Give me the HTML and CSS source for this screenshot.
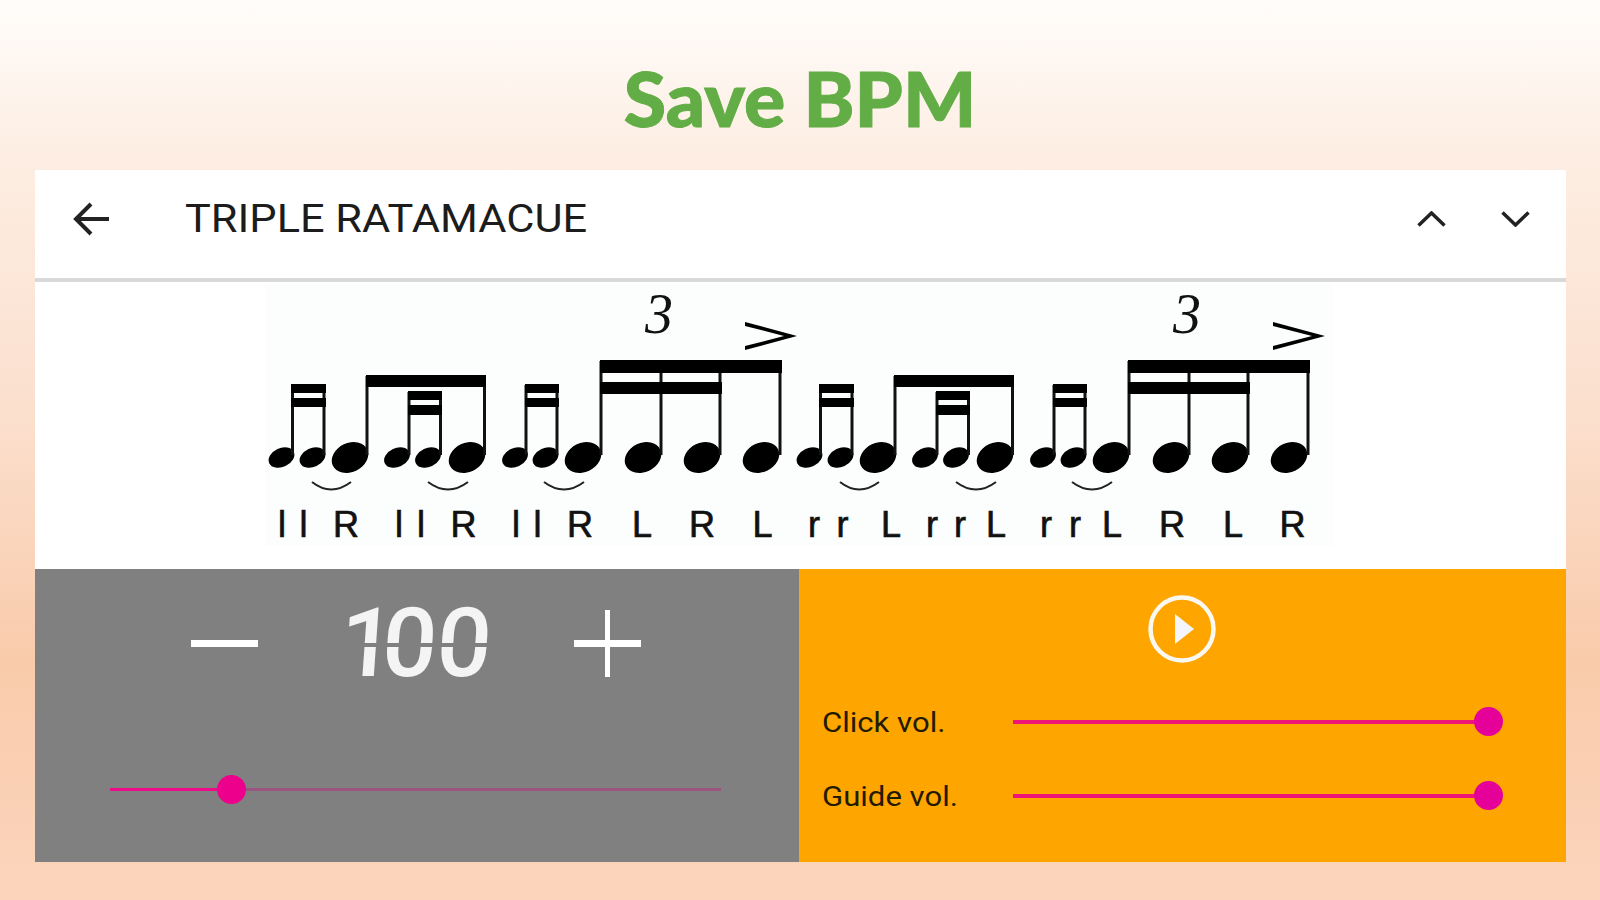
FILE: index.html
```html
<!DOCTYPE html>
<html lang="en">
<head>
  <meta charset="UTF-8">
  <title>Save BPM</title>
  <link rel="stylesheet" href="styles.css">
</head>
<body>

  <h1 class="promo-title">Save BPM</h1>

  <div class="card">
    <div class="toolbar">
      <svg class="back-icon" viewBox="0 0 37 34"><path d="M36 17H3M18 2 3 17l15 15"/></svg>
      <div class="rudiment-name">TRIPLE RATAMACUE</div>
      <div class="nav-icons">
        <svg class="chevron" viewBox="0 0 29 16"><path d="M1.5 14.5 14.5 2l13 12.5"/></svg>
        <svg class="chevron" viewBox="0 0 29 16"><path d="M1.5 1.5 14.5 14l13-12.5"/></svg>
      </div>
    </div>

    <svg class="notation" viewBox="35 282 1531 287">
      <defs>
        <g id="bar">
          <text class="tuplet" x="659" y="333">3</text>
          <polygon points="745,322 797,336 745,350 745,346 784,336 745,326"/>

          <!-- note heads -->
          <ellipse cx="281.5" cy="457.5" rx="13.5" ry="9.5" transform="rotate(-25 281.5 457.5)"/>
          <ellipse cx="312.5" cy="457.5" rx="13.5" ry="9.5" transform="rotate(-25 312.5 457.5)"/>
          <ellipse cx="350" cy="457.5" rx="19" ry="14.5" transform="rotate(-25 350 457.5)"/>
          <ellipse cx="397" cy="457.5" rx="13.5" ry="9.5" transform="rotate(-25 397 457.5)"/>
          <ellipse cx="428" cy="457.5" rx="13.5" ry="9.5" transform="rotate(-25 428 457.5)"/>
          <ellipse cx="467" cy="457.5" rx="19" ry="14.5" transform="rotate(-25 467 457.5)"/>
          <ellipse cx="515" cy="457.5" rx="13.5" ry="9.5" transform="rotate(-25 515 457.5)"/>
          <ellipse cx="545.5" cy="457.5" rx="13.5" ry="9.5" transform="rotate(-25 545.5 457.5)"/>
          <ellipse cx="583" cy="457.5" rx="19" ry="14.5" transform="rotate(-25 583 457.5)"/>
          <ellipse cx="643" cy="457.5" rx="19" ry="14.5" transform="rotate(-25 643 457.5)"/>
          <ellipse cx="702" cy="457.5" rx="19" ry="14.5" transform="rotate(-25 702 457.5)"/>
          <ellipse cx="761" cy="457.5" rx="19" ry="14.5" transform="rotate(-25 761 457.5)"/>

          <!-- stems -->
          <path class="stems" d="M292.5 385V455M324 385V455M367 376V455M409 392V455M440.5 392V455M484.5 376V455M526 385V455M557 385V455M601 361V455M661 361V455M720 361V455M780 361V455"/>

          <!-- beams -->
          <rect x="291" y="384" width="35" height="9"/>
          <rect x="291" y="398" width="35" height="9"/>
          <rect x="366" y="375" width="120" height="12"/>
          <rect x="408" y="391" width="34" height="9"/>
          <rect x="408" y="405" width="34" height="10"/>
          <rect x="525" y="384" width="34" height="9"/>
          <rect x="525" y="398" width="34" height="9"/>
          <rect x="600" y="360" width="182" height="13"/>
          <rect x="600" y="382" width="122" height="12"/>

          <!-- slurs -->
          <path class="slur" d="M312 482Q331 497 351 482M428 482Q448 497 468 482M544 482Q564 497 584 482"/>
        </g>
      </defs>

      <rect class="notation-bg" x="265" y="284" width="1068" height="262"/>
      <use href="#bar"/>
      <use href="#bar" transform="translate(528 0)"/>

      <text class="sticking" x="282" y="537">l</text>
      <text class="sticking" x="303.5" y="537">l</text>
      <text class="sticking" x="346" y="537">R</text>
      <text class="sticking" x="399" y="537">l</text>
      <text class="sticking" x="421" y="537">l</text>
      <text class="sticking" x="463.5" y="537">R</text>
      <text class="sticking" x="516" y="537">l</text>
      <text class="sticking" x="537.5" y="537">l</text>
      <text class="sticking" x="580" y="537">R</text>
      <text class="sticking" x="642" y="537">L</text>
      <text class="sticking" x="702" y="537">R</text>
      <text class="sticking" x="762.5" y="537">L</text>
      <text class="sticking" x="814" y="537">r</text>
      <text class="sticking" x="842.5" y="537">r</text>
      <text class="sticking" x="891" y="537">L</text>
      <text class="sticking" x="932" y="537">r</text>
      <text class="sticking" x="960" y="537">r</text>
      <text class="sticking" x="996" y="537">L</text>
      <text class="sticking" x="1046" y="537">r</text>
      <text class="sticking" x="1075" y="537">r</text>
      <text class="sticking" x="1112" y="537">L</text>
      <text class="sticking" x="1172" y="537">R</text>
      <text class="sticking" x="1233" y="537">L</text>
      <text class="sticking" x="1292.5" y="537">R</text>
    </svg>

    <div class="controls">
      <div class="tempo-panel">
        <div class="tempo-row">
          <svg class="step-icon" viewBox="0 0 67 67"><path d="M0 33.5H67"/></svg>
          <div class="lcd"><span class="lcd-one">1</span>00</div>
          <svg class="step-icon" viewBox="0 0 67 67"><path class="plus-v" d="M33.5 0V67"/><path d="M0 33.5H67"/></svg>
        </div>
        <div class="slider tempo-slider">
          <div class="slider-fill" style="width: 20%"></div>
          <div class="slider-thumb" style="left: 19.8%"></div>
        </div>
      </div>

      <div class="mix-panel">
        <svg class="play-icon" viewBox="0 0 68 68">
          <circle cx="34" cy="34" r="31.5"/>
          <path d="M27 19 46 34 27 49Z"/>
        </svg>
        <div class="volume-row click-row">
          <span class="volume-label">Click vol.</span>
          <div class="slider volume-slider">
            <div class="slider-fill" style="width: 100%"></div>
            <div class="slider-thumb" style="left: 100%"></div>
          </div>
        </div>
        <div class="volume-row">
          <span class="volume-label">Guide vol.</span>
          <div class="slider volume-slider">
            <div class="slider-fill" style="width: 100%"></div>
            <div class="slider-thumb" style="left: 100%"></div>
          </div>
        </div>
      </div>
    </div>
  </div>

</body>
</html>
```

FILE: styles.css
```css
body {
  margin: 0;
  height: 900px;
  overflow: hidden;
  font-family: Roboto, sans-serif;
  background: linear-gradient(#fffdfb 0, #fdeee3 150px, #fbdfcd 420px, #f9cbab 660px, #fbd4bb 880px);
}

.promo-title {
  margin: 0;
  height: 170px;
  box-sizing: border-box;
  padding-top: 52px;
  text-align: center;
  font-family: Lato, sans-serif;
  font-size: 77px;
  line-height: 90px;
  font-weight: 900;
  color: #62ad45;
  -webkit-text-stroke: 1px #62ad45;
}

.card {
  margin: 0 34px 0 35px;
  background: white;
}

.toolbar {
  display: flex;
  align-items: center;
  height: 112px;
  box-sizing: border-box;
  padding: 0 36px 10px 38px;
  border-bottom: 4px solid #d9d9d9;
}

.back-icon {
  width: 37px;
  height: 34px;
  fill: none;
  stroke: #222;
  stroke-width: 4;
}

.rudiment-name {
  margin-left: 75px;
  font-size: 38px;
  color: #1c1c1c;
  transform: scaleX(1.14);
  transform-origin: left;
}

.nav-icons {
  display: flex;
  gap: 55px;
  margin-left: auto;
}

.chevron {
  width: 29px;
  height: 16px;
  fill: none;
  stroke: #222;
  stroke-width: 3.5;
}

.notation {
  display: block;
  width: 1531px;
  height: 287px;
}

.notation-bg {
  fill: #fcfefe;
}

.stems {
  stroke: #111;
  stroke-width: 3;
  fill: none;
}

.slur {
  stroke: #222;
  stroke-width: 2;
  fill: none;
}

.tuplet {
  font-family: "Liberation Serif", serif;
  font-style: italic;
  font-size: 56px;
  text-anchor: middle;
  fill: #111;
}

.sticking {
  font-family: "Liberation Sans", sans-serif;
  font-size: 36px;
  text-anchor: middle;
  fill: #111;
  stroke: #111;
  stroke-width: 0.7;
}

.controls {
  display: grid;
  grid-template-columns: 764px 767px;
  height: 293px;
}

.tempo-panel {
  background: #808080;
  padding: 41px 158px 0 156px;
  box-sizing: border-box;
}

.tempo-row {
  display: flex;
  justify-content: space-between;
  height: 67px;
}

.step-icon {
  width: 67px;
  height: 67px;
  fill: none;
  stroke: white;
  stroke-width: 7;
}

.step-icon .plus-v {
  stroke-width: 5;
}

.lcd {
  position: relative;
  font-size: 96px;
  font-weight: 500;
  line-height: 67px;
  color: #f4f4f4;
  transform: skewX(-4deg);
}

.lcd-one {
  margin-right: -12px;
}

/* gap between the upper and lower segments */
.lcd::after {
  content: "";
  position: absolute;
  left: 0;
  right: 0;
  top: 33px;
  height: 4px;
  background: #808080;
}

.slider {
  position: relative;
  height: 3px;
  background: #9c5580;
}

.slider-fill {
  height: 100%;
  background: #ee0a88;
}

.slider-thumb {
  position: absolute;
  top: -13px;
  width: 29px;
  height: 29px;
  margin-left: -14px;
  border-radius: 50%;
  background: #ec008c;
}

.tempo-slider {
  width: 611px;
  margin: 111px 0 0 -81px;
}

.mix-panel {
  background: #ffa500;
  padding: 26px 0 0 23px;
}

.play-icon {
  display: block;
  width: 68px;
  height: 68px;
  margin-left: 326px;
}

.play-icon circle {
  fill: none;
  stroke: #fbf8f2;
  stroke-width: 4.5;
}

.play-icon path {
  fill: #f4f6fb;
}

.volume-row {
  display: flex;
  align-items: center;
  height: 40px;
  margin-top: 34px;
}

.click-row {
  margin-top: 39px;
}

.volume-label {
  width: 191px;
  font-size: 28px;
  color: #241a00;
  transform: scaleX(1.11);
  transform-origin: left;
}

.volume-slider {
  width: 475px;
  height: 4px;
  background: #ee1478;
}

.volume-slider .slider-fill {
  background: #ee1478;
}

.volume-slider .slider-thumb {
  background: #e6009a;
}
```
